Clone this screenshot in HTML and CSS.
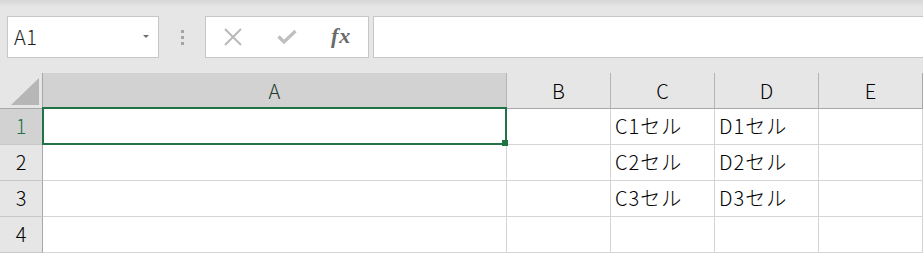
FILE: index.html
```html
<!DOCTYPE html>
<html lang="ja">
<head>
    <title>Sheet</title>
    <link rel="stylesheet" href="styles.css">
</head>
<body>
    <div class="toolbar">
        <div class="name-box">
            <span class="name-text">A1</span>
            <span class="name-arrow"></span>
        </div>
        <div class="grip">
            <span></span><span></span><span></span>
        </div>
        <div class="fx-buttons">
            <!-- cancel -->
            <svg class="btn-icon" width="20" height="18" viewBox="0 0 20 18">
                <path d="M2 1 L18 17 M18 1 L2 17" stroke="#b9b9b9" stroke-width="2" fill="none"/>
            </svg>
            <!-- enter -->
            <svg class="btn-icon" width="20" height="16" viewBox="0 0 20 16">
                <path d="M1.5 7.5 L7 13 L18.5 2" stroke="#bfbfbf" stroke-width="3.2" fill="none"/>
            </svg>
            <span class="fx">fx</span>
        </div>
        <div class="formula-input"></div>
    </div>

    <div class="sheet">
        <div class="corner"><span class="corner-tri"></span></div>
        <div class="col-head selected-col">A</div>
        <div class="col-head">B</div>
        <div class="col-head">C</div>
        <div class="col-head">D</div>
        <div class="col-head last">E</div>

        <div class="row-head selected-row">1</div>
        <div class="cell active">
            <div class="selection"></div>
            <div class="fill-handle"></div>
        </div>
        <div class="cell"></div>
        <div class="cell">C1セル</div>
        <div class="cell">D1セル</div>
        <div class="cell"></div>

        <div class="row-head">2</div>
        <div class="cell"></div>
        <div class="cell"></div>
        <div class="cell">C2セル</div>
        <div class="cell">D2セル</div>
        <div class="cell"></div>

        <div class="row-head">3</div>
        <div class="cell"></div>
        <div class="cell"></div>
        <div class="cell">C3セル</div>
        <div class="cell">D3セル</div>
        <div class="cell"></div>

        <div class="row-head">4</div>
        <div class="cell"></div>
        <div class="cell"></div>
        <div class="cell"></div>
        <div class="cell"></div>
        <div class="cell"></div>
    </div>
</body>
</html>
```

FILE: styles.css
```css
body {
    margin: 0;
    padding: 0;
    width: 923px;
    height: 253px;
    overflow: hidden;
    background: #ffffff;
    font-family: "Noto Sans CJK JP", "Noto Sans", sans-serif;
    font-weight: 300;
}

/* formula bar */
.toolbar {
    height: 73px;
    box-sizing: border-box;
    padding: 16px 0 0 7px;
    display: flex;
    align-items: flex-start;
    background: linear-gradient(#d6d6d6 0px, #e6e6e6 7px, #e6e6e6 100%);
}

.name-box {
    width: 152px;
    height: 42px;
    box-sizing: border-box;
    border: 1px solid #c6c6c6;
    background: #fff;
    display: flex;
    align-items: center;
    justify-content: space-between;
    padding: 0 9px 0 6px;
}

.name-text {
    font-size: 20px;
    color: #1e1e1e;
    line-height: 1;
    letter-spacing: 0.5px;
}

.name-arrow {
    width: 0;
    height: 0;
    border-left: 3px solid transparent;
    border-right: 3px solid transparent;
    border-top: 3px solid #6e6e6e;
    margin-bottom: 2px;
}

.grip {
    width: 46px;
    height: 42px;
    display: flex;
    flex-direction: column;
    align-items: center;
    justify-content: center;
    gap: 3px;
}

.grip span {
    width: 3px;
    height: 3px;
    background: #a4a4a4;
}

.fx-buttons {
    width: 164px;
    height: 42px;
    box-sizing: border-box;
    border: 1px solid #c6c6c6;
    background: #fff;
    display: flex;
    align-items: center;
    padding-left: 17px;
    gap: 34px;
}

.btn-icon {
    display: block;
}

.fx {
    font-family: "Liberation Serif", serif;
    font-style: italic;
    font-weight: bold;
    font-size: 22px;
    color: #6a6a6a;
    line-height: 1;
    letter-spacing: 1px;
    margin-top: -2px;
}

.formula-input {
    flex: 1;
    margin-left: 4px;
    height: 42px;
    box-sizing: border-box;
    border: 1px solid #c6c6c6;
    border-right: none;
    background: #fff;
}

/* grid */
.sheet {
    display: grid;
    grid-template-columns: 43px 464px 104px 104px 104px 104px;
    grid-template-rows: 36px 36px 36px 36px 36px;
    font-size: 20px;
    color: #000;
}

.corner,
.col-head,
.row-head,
.cell {
    box-sizing: border-box;
    border-right: 1px solid #d4d4d4;
    border-bottom: 1px solid #d4d4d4;
}

.corner {
    background: #e6e6e6;
    border-right: 1px solid #a8a8a8;
    border-bottom: 1px solid #a8a8a8;
    position: relative;
}

.corner-tri {
    position: absolute;
    right: 3px;
    bottom: 3px;
    width: 0;
    height: 0;
    border-left: 28px solid transparent;
    border-bottom: 27px solid #b6b6b6;
}

.col-head {
    background: #e6e6e6;
    border-right: 1px solid #b5b5b5;
    border-bottom: 1px solid #a8a8a8;
    display: flex;
    align-items: center;
    justify-content: center;
}

.col-head.last {
    border-right: 1px solid #a8a8a8;
}

.row-head {
    background: #e6e6e6;
    border-right: 1px solid #a8a8a8;
    border-bottom: 1px solid #c8c8c8;
    display: flex;
    align-items: center;
    justify-content: center;
    padding-bottom: 2px;
}

.selected-col {
    background: #d2d2d2;
    color: #1c3a2c;
}

.selected-row {
    background: #d2d2d2;
    color: #217346;
}

.cell {
    display: flex;
    align-items: center;
    padding: 0 0 2px 4px;
    white-space: nowrap;
    letter-spacing: 1px;
}

.cell.active {
    position: relative;
}

.selection {
    position: absolute;
    top: -2px;
    left: -1px;
    right: -1px;
    bottom: -1px;
    border: 2px solid #217346;
}

.fill-handle {
    position: absolute;
    right: -2px;
    bottom: -2px;
    width: 6px;
    height: 6px;
    background: #217346;
}
```
